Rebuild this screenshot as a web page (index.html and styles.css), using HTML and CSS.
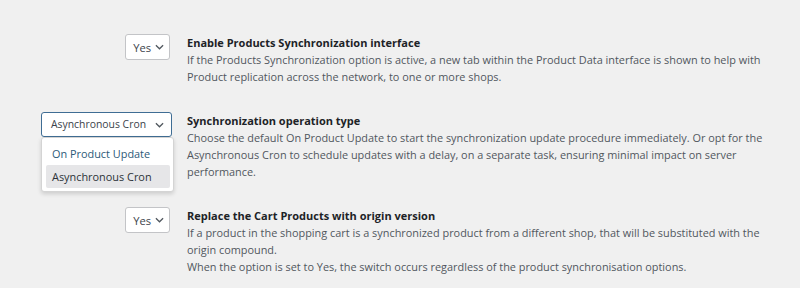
FILE: index.html
```html
<!DOCTYPE html>
<html>
<head>
<meta charset="utf-8">
<link rel="stylesheet" href="styles.css">
</head>
<body>
<div class="settings">
  <div class="row">
    <div class="control">
      <div class="select"><span>Yes</span><svg class="chev" viewBox="0 0 10 6" width="9" height="6"><path d="M1 1l4 4 4-4" fill="none" stroke="currentColor" stroke-width="1.4"/></svg></div>
    </div>
    <div class="text">
      <div class="title">Enable Products Synchronization interface</div>
      <div class="desc">If the Products Synchronization option is active, a new tab within the Product Data interface is shown to help with<br>Product replication across the network, to one or more shops.</div>
    </div>
  </div>
  <div class="row">
    <div class="control">
      <div class="select select-open"><span>Asynchronous Cron</span><svg class="chev" viewBox="0 0 10 6" width="9" height="6"><path d="M1 1l4 4 4-4" fill="none" stroke="currentColor" stroke-width="1.4"/></svg>
        <div class="menu">
          <div class="opt opt-first">On Product Update</div>
          <div class="opt opt-hover">Asynchronous Cron</div>
        </div>
      </div>
    </div>
    <div class="text">
      <div class="title">Synchronization operation type</div>
      <div class="desc">Choose the default On Product Update to start the synchronization update procedure immediately. Or opt for the<br>Asynchronous Cron to schedule updates with a delay, on a separate task, ensuring minimal impact on server<br>performance.</div>
    </div>
  </div>
  <div class="row">
    <div class="control">
      <div class="select"><span>Yes</span><svg class="chev" viewBox="0 0 10 6" width="9" height="6"><path d="M1 1l4 4 4-4" fill="none" stroke="currentColor" stroke-width="1.4"/></svg></div>
    </div>
    <div class="text">
      <div class="title">Replace the Cart Products with origin version</div>
      <div class="desc">If a product in the shopping cart is a synchronized product from a different shop, that will be substituted with the<br>origin compound.<br>When the option is set to Yes, the switch occurs regardless of the product synchronisation options.</div>
    </div>
  </div>
</div>
</body>
</html>
```
FILE: styles.css
```css
html, body {
  margin: 0;
  padding: 0;
  background: #f0f0f0;
}
body {
  width: 800px;
  height: 288px;
  overflow: hidden;
  font-family: "Open Sans", "Noto Sans", sans-serif;
  font-size: 10.9px;
  line-height: 17px;
  color: #50575e;
}
.settings {
  padding-top: 34px;
  display: flex;
  flex-direction: column;
  gap: 27px;
}
.row {
  display: grid;
  grid-template-columns: 170px 1fr;
  column-gap: 17px;
  padding-right: 10px;
}
.control {
  display: flex;
  justify-content: flex-end;
  align-items: flex-start;
}
.select {
  position: relative;
  display: flex;
  align-items: center;
  gap: 4px;
  box-sizing: border-box;
  height: 26px;
  padding: 0 5px 0 7px;
  border: 1px solid #c3c4c7;
  border-radius: 3px;
  background: #fff;
  color: #3c434a;
  font-size: 11.2px;
}
.chev {
  color: #50575e;
}
.select-open {
  width: 131px;
  height: 25px;
  margin-right: -2px;
  padding-left: 9px;
  padding-right: 7px;
  justify-content: space-between;
  border-color: #3f6d94;
  font-size: 10.4px;
}
.menu {
  position: absolute;
  left: -1px;
  top: 24px;
  width: 133px;
  box-sizing: border-box;
  padding: 4px 3px 3px 4px;
  background: #fff;
  border: 1px solid #d4d4d4;
  border-radius: 3px;
  box-shadow: 0 2px 4px rgba(0,0,0,0.15);
}
.opt {
  height: 23px;
  line-height: 23px;
  padding-left: 6px;
  color: #2c3338;
  font-size: 10.9px;
}
.opt-first {
  color: #2d5a78;
}
.opt-hover {
  background: #e6e6e8;
  border-radius: 2px;
}
.title {
  color: #1d2327;
  font-weight: 700;
  font-size: 11px;
}
```
